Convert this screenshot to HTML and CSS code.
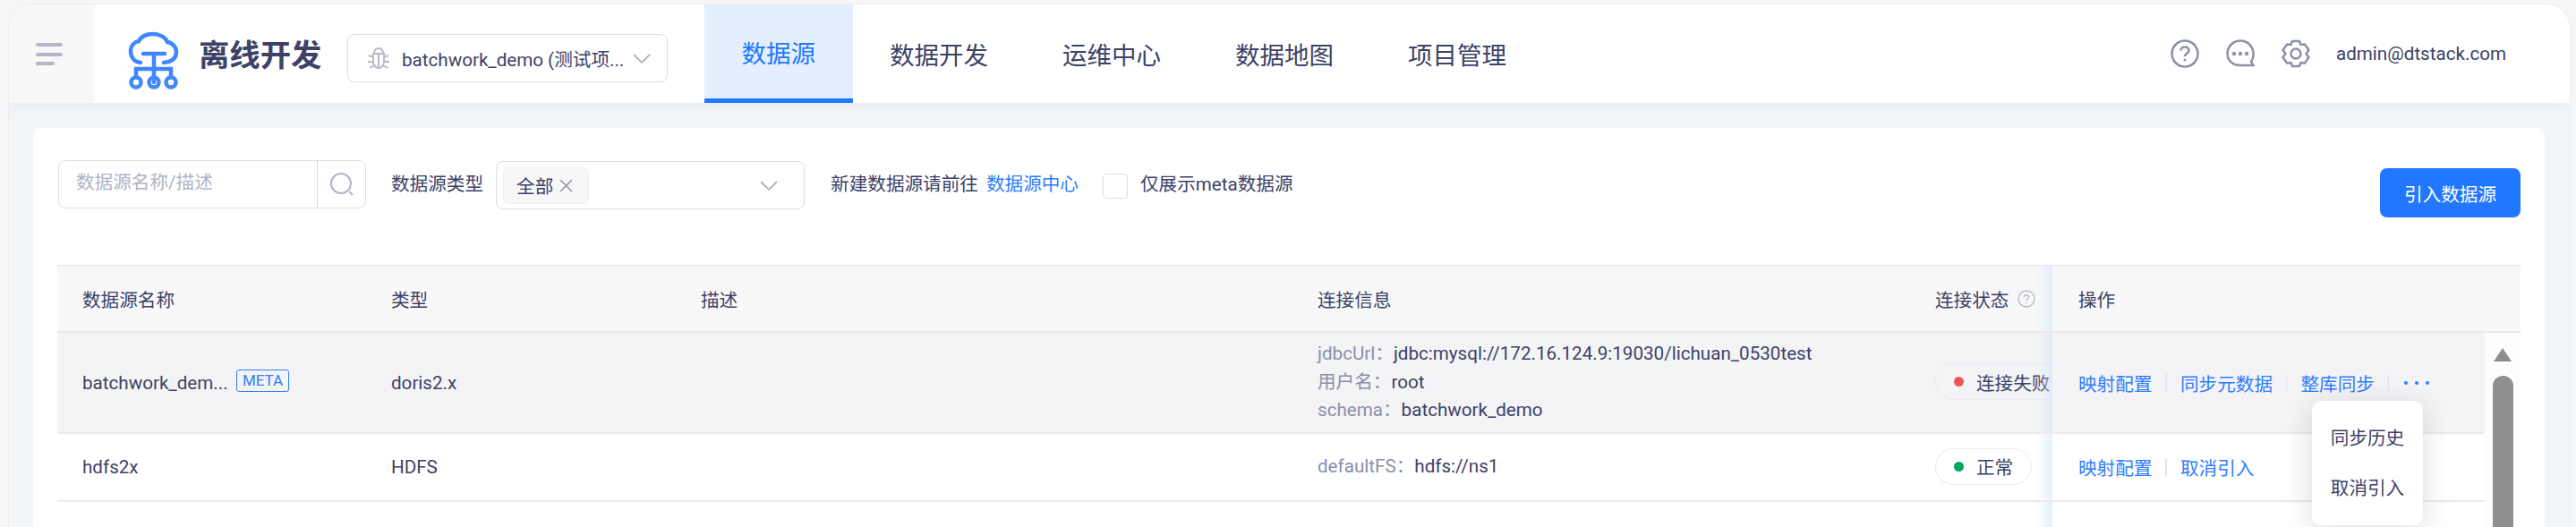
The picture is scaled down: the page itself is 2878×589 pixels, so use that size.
FILE: index.html
```html
<!DOCTYPE html>
<html lang="zh">
<head>
<meta charset="utf-8">
<title>离线开发</title>
<link rel="stylesheet" href="styles.css">
</head>
<body>
<div class="window">
  <header class="header">
    <div class="side-toggle">
      <svg class="burger" width="30" height="28" viewBox="0 0 30 28"><path d="M2 3H28M2 14H28M2 24H19"/></svg>
    </div>
    <svg class="logo" width="64" height="68" viewBox="140 28 64 68">
      <path d="M157 65C149 64 146 58 146 52C146 46 150 42 155 41C158 35 164 33 171 33C179 33 185 37 187 42C193 43 197 48 197 53C197 60 192 64 183 65M160 55H184M172 55V87M152 81V72H191V81"/>
      <circle cx="152" cy="87" r="5.5"/><circle cx="172" cy="87" r="5.5"/><circle cx="191" cy="87" r="5.5"/>
    </svg>
    <div class="app-title">离线开发</div>
    <div class="project">
      <svg class="bug" width="26" height="26" viewBox="0 0 26 26"><path d="M8 8C8 4 10 2 13 2C16 2 18 4 18 8ZM7 8H19V17C19 21 16 24 13 24C10 24 7 21 7 17ZM13 8V24M7 12L2 10M7 17H1M8 21L3 24M19 12L24 10M19 17H25M18 21L23 24"/></svg>
      <span class="project-name">batchwork_demo (测试项...</span>
      <svg class="chev" width="20" height="11" viewBox="0 0 20 11"><path d="M1 1L10 10L19 1"/></svg>
    </div>
    <nav class="nav">
      <a class="nav-item active">数据源</a>
      <a class="nav-item">数据开发</a>
      <a class="nav-item">运维中心</a>
      <a class="nav-item">数据地图</a>
      <a class="nav-item">项目管理</a>
    </nav>
    <div class="tools">
      <svg class="tool" width="32" height="32" viewBox="0 0 32 32"><circle cx="16" cy="16" r="14.5"/><path d="M11.5 12.5C11.5 10 13.5 8.5 16 8.5C18.500 8.500 20.500 10 20.500 12.500C20.500 15.500 16 15.500 16 19"/><circle class="fill" cx="16" cy="23" r="1.5"/></svg>
      <svg class="tool" width="32" height="32" viewBox="0 0 32 32"><path d="M16 1.500C8 1.500 1.500 8 1.500 16C1.500 24 8 29 16 29H30.500L28 25C30 22.500 30.500 19.500 30.500 16C30.500 8 24 1.500 16 1.500Z"/><circle class="fill" cx="9" cy="16" r="2.200"/><circle class="fill" cx="16" cy="16" r="2.200"/><circle class="fill" cx="23" cy="16" r="2.200"/></svg>
      <svg class="tool" width="32" height="32" viewBox="0 0 32 32"><path d="M12 2H20L21.500 6L26 5.500L30.500 12L27.500 16L30.500 20L26 26.500L21.500 26L20 30H12L10.500 26L6 26.500L1.500 20L4.500 16L1.500 12L6 5.500L10.500 6Z" stroke-linejoin="round"/><circle cx="16" cy="16" r="5.500"/></svg>
      <span class="user">admin@dtstack.com</span>
    </div>
  </header>
  <main class="main">
    <section class="card">
      <div class="toolbar">
        <div class="search">
          <span class="search-input">数据源名称/描述</span>
          <span class="search-btn">
            <svg class="search-icon" width="28" height="28" viewBox="0 0 28 28"><circle cx="13" cy="13" r="11"/><path d="M22 22L26 26"/></svg>
          </span>
        </div>
        <span class="field-label">数据源类型</span>
        <div class="select">
          <span class="tag">全部<svg class="tag-x" width="15" height="15" viewBox="0 0 15 15"><path d="M1 1L14 14M14 1L1 14"/></svg></span>
          <svg class="chev" width="20" height="11" viewBox="0 0 20 11"><path d="M1 1L10 10L19 1"/></svg>
        </div>
        <span class="hint">新建数据源请前往</span>
        <a class="link hint-link">数据源中心</a>
        <span class="checkbox"></span>
        <span class="check-label">仅展示meta数据源</span>
        <button class="primary">引入数据源</button>
      </div>
      <div class="table">
        <div class="row head">
          <div class="cell">数据源名称</div>
          <div class="cell">类型</div>
          <div class="cell">描述</div>
          <div class="cell">连接信息</div>
          <div class="cell">连接状态<svg class="q" width="20" height="20" viewBox="0 0 20 20"><circle cx="10" cy="10" r="9"/><path d="M7.500 8C7.500 6.500 8.500 5.500 10 5.500C11.500 5.500 12.500 6.500 12.500 8C12.500 10 10 10 10 12"/><circle class="fill" cx="10" cy="14.500" r="0.800"/></svg></div>
          <div class="cell ops">操作</div>
        </div>
        <div class="body">
          <div class="rows">
            <div class="row hover r1">
              <div class="cell"><span class="name">batchwork_dem...</span><span class="meta">META</span></div>
              <div class="cell">doris2.x</div>
              <div class="cell"></div>
              <div class="cell conn">
                <div><span class="k">jdbcUrl：</span>jdbc:mysql://172.16.124.9:19030/lichuan_0530test</div>
                <div><span class="k">用户名：</span>root</div>
                <div><span class="k">schema：</span>batchwork_demo</div>
              </div>
              <div class="cell status"><span class="pill"><i class="dot red"></i>连接失败</span></div>
              <div class="cell ops"><a class="link">映射配置</a><i class="sep"></i><a class="link">同步元数据</a><i class="sep"></i><a class="link">整库同步</a><i class="sep"></i><a class="more"><i></i><i></i><i></i></a></div>
            </div>
            <div class="row r2">
              <div class="cell">hdfs2x</div>
              <div class="cell">HDFS</div>
              <div class="cell"></div>
              <div class="cell conn"><div><span class="k">defaultFS：</span>hdfs://ns1</div></div>
              <div class="cell status"><span class="pill"><i class="dot green"></i>正常</span></div>
              <div class="cell ops"><a class="link">映射配置</a><i class="sep"></i><a class="link">取消引入</a></div>
            </div>
            <div class="row r1">
              <div class="cell"></div>
              <div class="cell"></div>
              <div class="cell"></div>
              <div class="cell conn">
                <div><span class="k">jdbcUrl：</span>jdbc:postgresql://172.16.124.40:31432/postgres?currentSch</div>
              </div>
              <div class="cell status"></div>
              <div class="cell ops"></div>
            </div>
          </div>
          <div class="scrollbar">
            <span class="arrow"></span>
            <span class="thumb"></span>
          </div>
          <div class="menu">
            <div class="menu-item">同步历史</div>
            <div class="menu-item">取消引入</div>
          </div>
        </div>
      </div>
    </section>
  </main>
</div>
</body>
</html>
```

FILE: styles.css
```css
* { box-sizing: border-box; }
html, body { margin: 0; height: 589px; overflow: hidden; }
body {
  background: #f6f6f6;
  padding: 5px 7px 0 10px;
  font-family: Roboto, "Noto Sans CJK SC", sans-serif;
  font-size: 20.625px;
  color: #3d4266;
}
svg { display: block; flex: none; fill: none; }
.window {
  height: 584px;
  border-radius: 26px 26px 0 0;
  overflow: hidden;
  background: #f2f6f9;
  box-shadow: 0 0 0 1px #ececee;
}
.header {
  display: flex;
  align-items: center;
  height: 110px;
  background: #fff;
  position: relative;
  box-shadow: 0 4px 14px rgba(60, 80, 120, 0.06);
}
.side-toggle {
  width: 96px;
  height: 100%;
  background: #f8f8f9;
  display: flex;
  align-items: center;
  justify-content: center;
}
.burger { stroke: #b4b6c8; stroke-width: 4; stroke-linecap: round; margin-top: 1px; margin-right: 7px; }
.logo { margin-left: 34px; margin-top: 14px; stroke: #3f87ff; stroke-width: 4.5; stroke-linecap: round; }
.app-title { margin-left: 18px; font-size: 34.375px; font-weight: 700; line-height: 40px; width: 148px; margin-top: 4px; }
.project {
  margin-left: 18px;
  width: 358px;
  height: 54px;
  border: 1.5px solid #dcdce4;
  border-radius: 8px;
  display: flex;
  align-items: center;
  padding-left: 21px;
  margin-top: 10px;
}
.bug { stroke: #b9bac8; stroke-width: 2; }
.project-name { margin-left: 13px; width: 258px; white-space: nowrap; }
.chev { stroke: #b0b2c2; stroke-width: 1.8; }
.nav { margin-left: 41px; display: flex; height: 100%; }
.nav-item {
  display: flex;
  align-items: center;
  padding: 0 41.500px;
  font-size: 27.500px;
  color: #3d4266;
}
.nav-item.active {
  background: #e4eeff;
  border-bottom: 5px solid #2177ff;
  color: #2177ff;
}
.tools { margin-left: auto; display: flex; align-items: center; padding-right: 71px; }
.tool { stroke: #8e90a8; stroke-width: 2.500; margin-left: 30px; }
.tool .fill, .q .fill { fill: #8e90a8; stroke: none; }
.user { margin-left: 29px; white-space: nowrap; }
.main { padding: 28px 28px 0 27px; }
.card { background: #fff; border-radius: 8px 8px 0 0; padding: 0 27px 0 27px; height: 460px; }
.toolbar { display: flex; align-items: flex-start; height: 153px; padding-top: 36px; }
.search { display: flex; width: 344px; height: 54px; border: 1.5px solid #dcdce4; border-radius: 8px; margin-left: 1px; }
.search-input { flex: 1; padding-left: 19px; line-height: 49px; color: #b1b4c5; }
.search-btn { width: 54px; border-left: 1.5px solid #dcdce4; display: flex; align-items: center; justify-content: center; }
.search-icon { stroke: #b1b4c5; stroke-width: 2; }
.field-label { margin-left: 28px; line-height: 54px; }
.select {
  margin-left: 14px;
  width: 345px;
  height: 54px;
  margin-top: 1px;
  border: 1.5px solid #dcdce4;
  border-radius: 8px;
  display: flex;
  align-items: center;
  justify-content: space-between;
  padding: 0 29px 0 7px;
}
.tag { display: flex; align-items: center; width: 96px; height: 41px; background: #f7f7f8; border: 1px solid #efeff3; border-radius: 6px; padding-left: 14px; }
.tag-x { stroke: #8e90a8; stroke-width: 1.500; margin-left: 7px; }
.hint { margin-left: 29px; line-height: 54px; }
.link { color: #2f7dff; white-space: nowrap; }
.hint-link { margin-left: 9px; line-height: 54px; }
.checkbox { width: 28px; height: 28px; border: 1.5px solid #dcdce4; border-radius: 4px; margin: 15px 0 0 27px; }
.check-label { margin-left: 14px; line-height: 54px; }
.primary {
  margin-left: auto;
  margin-top: 9px;
  width: 157px;
  height: 55px;
  background: #2177ff;
  color: #fff;
  border: 0;
  border-radius: 8px;
  font: inherit;
  padding: 0;
}
.table { position: relative; border-top: 2px solid #eaeaef; }
.row { display: grid; grid-template-columns: 345px 346px 689px 690px 159px 1fr; }
.head { height: 74px; background: #f8f8f9; border-bottom: 2px solid #eaeaef; }
.cell { display: flex; align-items: center; padding-left: 28px; min-width: 0; white-space: nowrap; }
.ops { position: relative; background: inherit; padding-left: 29px; }
.ops::before {
  content: "";
  position: absolute;
  top: 0;
  bottom: 0;
  left: -18px;
  width: 18px;
  background: linear-gradient(to right, rgba(210, 225, 255, 0), rgba(210, 225, 255, 0.55));
}
.body { display: flex; position: relative; }
.rows { flex: 1; min-width: 0; }
.r1 { height: 113px; border-bottom: 2px solid #eaeaef; }
.r2 { height: 76px; border-bottom: 2px solid #eaeaef; background: #fff; }
.hover { background: #f4f4f6; }
.name { width: 160px; margin-right: 12px; }
.meta { width: 59px; height: 25px; border: 1.5px solid #2f7dff; border-radius: 3px; color: #2f7dff; font-size: 17px; line-height: 22px; text-align: center; margin-top: -4px; }
.conn { display: block; align-self: center; line-height: 31.500px; }
.k { color: #8b8fa8; }
.status { overflow: hidden; }
.pill { flex: none; display: flex; align-items: center; height: 41px; padding: 0 19px 0 20px; border: 1.5px solid #eaeaef; border-radius: 21px; margin-top: -2px; min-width: 108px; }
.hover .pill { width: 160px; }
.dot { width: 11px; height: 11px; border-radius: 50%; margin-right: 14px; flex: none; }
.red { background: #f25555; }
.green { background: #00a85a; }
.sep { width: 1.500px; height: 20px; background: #e6e6ec; margin: 0 15px; flex: none; }
.more { display: flex; gap: 8px; margin-left: 2px; }
.more i { width: 4px; height: 4px; border-radius: 50%; background: #2f7dff; }
.scrollbar { width: 40px; background: #fdfdfd; display: flex; flex-direction: column; align-items: center; padding-top: 17px; }
.arrow { width: 0; height: 0; border-left: 10px solid transparent; border-right: 10px solid transparent; border-bottom: 15px solid #8e8e8e; }
.thumb { width: 23px; height: 300px; margin-top: 16px; background: #8e8e8e; border-radius: 12px; }
.menu {
  position: absolute;
  left: 2519px;
  top: 76px;
  width: 124px;
  height: 139px;
  background: #fff;
  border-radius: 10px;
  box-shadow: 0 6px 32px rgba(30, 40, 70, 0.16);
  padding-top: 14px;
  text-align: center;
}
.menu-item { height: 56px; line-height: 56px; }
.q { stroke: #b9bac8; stroke-width: 1.400; margin-left: 10px; }
.q .fill { fill: #b9bac8; }
```
